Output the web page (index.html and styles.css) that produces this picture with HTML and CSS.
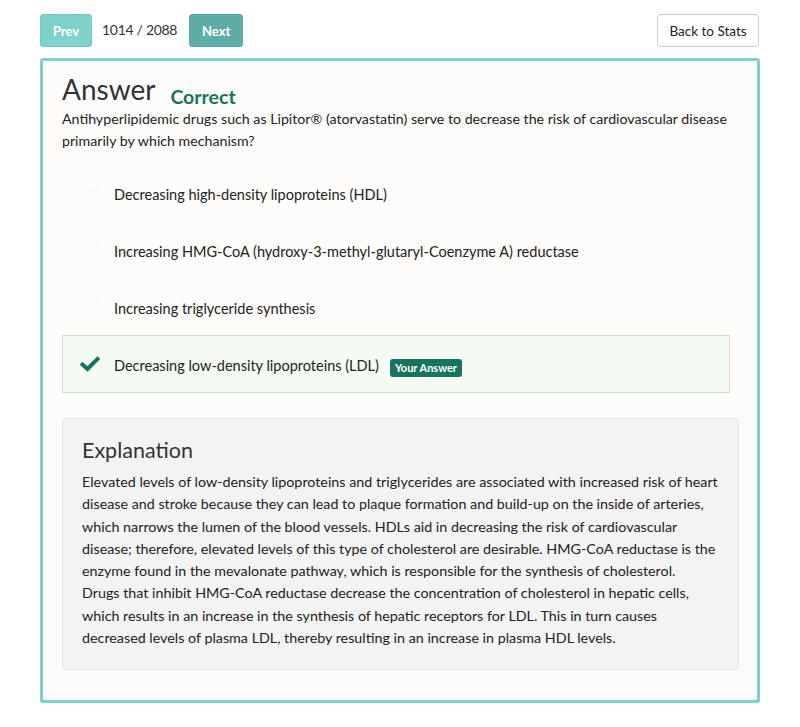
FILE: index.html
```html
<!DOCTYPE html>
<html>
<head>
<meta charset="utf-8">
<link rel="stylesheet" href="styles.css">
</head>
<body>
<div class="page">
  <div class="topbar">
    <div class="nav">
      <button class="btn btn-prev">Prev</button>
      <span class="counter">1014 / 2088</span>
      <button class="btn btn-next">Next</button>
    </div>
    <button class="btn-back">Back to Stats</button>
  </div>
  <div class="panel">
    <div class="head">
      <h1 class="title">Answer</h1>
      <span class="status">Correct</span>
    </div>
    <p class="question">Antihyperlipidemic drugs such as Lipitor® (atorvastatin) serve to decrease the risk of cardiovascular disease primarily by which mechanism?</p>
    <ul class="options">
      <li class="option"><span class="check check-faint"><svg viewBox="0 0 20 16" width="20" height="16"><path d="M2 8.5 L7.5 13.5 L18 3" fill="none" stroke="currentColor" stroke-width="4" stroke-linecap="square"/></svg></span><span>Decreasing high-density lipoproteins (HDL)</span></li>
      <li class="option"><span class="check check-faint"><svg viewBox="0 0 20 16" width="20" height="16"><path d="M2 8.5 L7.5 13.5 L18 3" fill="none" stroke="currentColor" stroke-width="4" stroke-linecap="square"/></svg></span><span>Increasing HMG-CoA (hydroxy-3-methyl-glutaryl-Coenzyme A) reductase</span></li>
      <li class="option"><span class="check check-faint"><svg viewBox="0 0 20 16" width="20" height="16"><path d="M2 8.5 L7.5 13.5 L18 3" fill="none" stroke="currentColor" stroke-width="4" stroke-linecap="square"/></svg></span><span>Increasing triglyceride synthesis</span></li>
      <li class="option option-selected"><span class="check"><svg viewBox="0 0 20 16" width="20" height="16"><path d="M2.5 8.5 L7.5 13 L17.5 3" fill="none" stroke="currentColor" stroke-width="4" stroke-linecap="square"/></svg></span><span>Decreasing low-density lipoproteins (LDL)</span><span class="badge">Your Answer</span></li>
    </ul>
    <div class="explanation">
      <h2 class="exp-title">Explanation</h2>
      <p class="exp-text">Elevated levels of low-density lipoproteins and triglycerides are associated with increased risk of heart<br>disease and stroke because they can lead to plaque formation and build-up on the inside of arteries,<br>which narrows the lumen of the blood vessels. HDLs aid in decreasing the risk of cardiovascular<br>disease; therefore, elevated levels of this type of cholesterol are desirable. HMG-CoA reductase is the<br>enzyme found in the mevalonate pathway, which is responsible for the synthesis of cholesterol.<br>Drugs that inhibit HMG-CoA reductase decrease the concentration of cholesterol in hepatic cells,<br>which results in an increase in the synthesis of hepatic receptors for LDL. This in turn causes<br>decreased levels of plasma LDL, thereby resulting in an increase in plasma HDL levels.</p>
    </div>
  </div>
</div>
</body>
</html>
```

FILE: styles.css
```css
* { box-sizing: border-box; }
html, body { margin: 0; padding: 0; background: #ffffff; }
body {
  font-family: Lato, "Open Sans", sans-serif;
  color: #333333;
}
.page {
  width: 720px;
  margin-left: 40px;
  padding-top: 14px;
}
.topbar {
  display: flex;
  justify-content: space-between;
  align-items: center;
  height: 33px;
}
.nav {
  display: flex;
  align-items: center;
}
.btn {
  height: 33px;
  border: 1px solid transparent;
  border-radius: 3px;
  color: #ffffff;
  font-family: Lato, sans-serif;
  font-weight: 700;
  font-size: 13px;
  padding: 0;
  cursor: pointer;
}
.btn-prev {
  width: 52px;
  background: #80d0cc;
  border-color: #76c6c2;
}
.btn-next {
  width: 54px;
  background: #5fada9;
  border-color: #5aa7a3;
}
.counter {
  font-size: 14px;
  letter-spacing: -0.3px;
  color: #333;
  margin: 0 12px 0 10px;
  position: relative;
  top: -1px;
}
.btn-back {
  width: 102px;
  height: 33px;
  background: #ffffff;
  border: 1px solid #cccccc;
  border-radius: 4px;
  font-family: Lato, sans-serif;
  font-size: 13.5px;
  color: #222;
  padding: 0;
  position: relative;
  left: -1px;
}
.panel {
  margin-top: 11px;
  border: 3px solid #7fd0cc;
  border-radius: 3px;
  background: #fdfcfa;
  padding: 9px 18px 30px 19px;
}
.head {
  display: flex;
  align-items: baseline;
}
.title {
  margin: 0;
  font-size: 28px;
  font-weight: 400;
  line-height: 38px;
  color: #333;
}
.status {
  margin-left: 15px;
  font-size: 19.5px;
  font-weight: 700;
  color: #17745f;
  position: relative;
  top: 4px;
}
.question {
  margin: 0;
  font-size: 14.2px;
  line-height: 22px;
  color: #222;
}
.options {
  list-style: none;
  margin: 12px 9px 0 0;
  padding: 0;
}
.option {
  display: flex;
  align-items: center;
  height: 57px;
  padding-left: 17px;
  padding-top: 4px;
  font-size: 14.5px;
  color: #222;
  border: 1px solid transparent;
}
.option-selected {
  height: 58px;
  padding-top: 3px;
  background: #f5faf4;
  border-color: #c8e4c4;
}
.check {
  width: 20px;
  height: 16px;
  margin-right: 14px;
  color: #17745f;
  display: flex;
  position: relative;
  top: -2px;
}
.check-faint { color: #fafaf8; }
.badge {
  margin-left: 11px;
  background: #17745f;
  color: #ffffff;
  font-size: 11px;
  font-weight: 700;
  padding: 3px 5px;
  border-radius: 3px;
  line-height: 12px;
  position: relative;
  top: 2px;
}
.explanation {
  margin-top: 25px;
  background: #f3f3f3;
  border: 1px solid #e2e2e2;
  border-radius: 4px;
  padding: 18px 10px 20px 19px;
}
.exp-title {
  margin: 0 0 8px 0;
  font-size: 21.5px;
  font-weight: 400;
  line-height: 26px;
  color: #333;
}
.exp-text {
  margin: 0;
  font-size: 14.3px;
  line-height: 22.3px;
  color: #222;
}
```
